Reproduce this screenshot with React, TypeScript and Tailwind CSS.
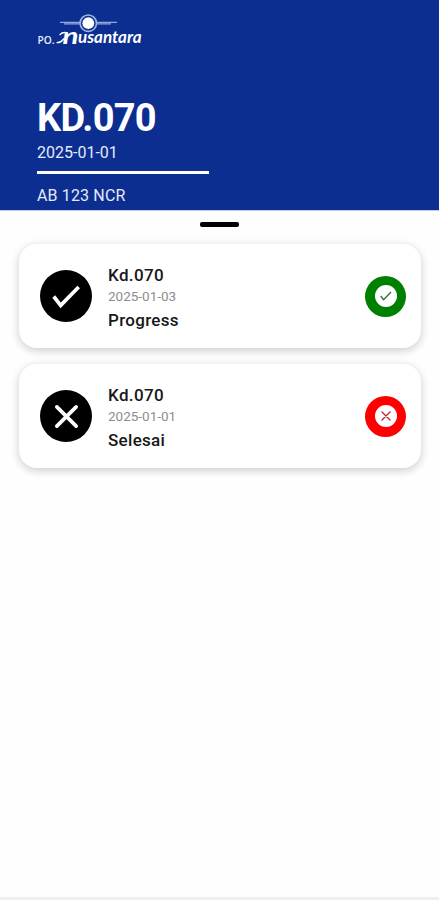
type Status = 'progress' | 'done'

type Trip = {
  code: string
  date: string
  label: string
  status: Status
}

const TRIPS: Trip[] = [
  { code: 'Kd.070', date: '2025-01-03', label: 'Progress', status: 'progress' },
  { code: 'Kd.070', date: '2025-01-01', label: 'Selesai', status: 'done' },
]

function Logo() {
  return (
    <svg className="block w-[110px] h-[38px]" viewBox="36 10 110 38" fill="none">
      {/* Emblem */}
      <path d="M60 22.3H80M97 22.3H117M64 23.9H80M97 23.9H111" stroke="#8fa9df" strokeWidth={1.2} />
      <circle cx="88.3" cy="23.2" r="8.2" stroke="#9db5e6" strokeWidth={1.6} />
      <circle cx="88.3" cy="23.2" r="5.9" fill="#fff" />
      {/* Name */}
      <text x="37.5" y="44" fill="#e8effc" fontFamily="Open Sans, sans-serif" fontSize="10" fontWeight="600" textLength="17" lengthAdjust="spacingAndGlyphs">PO.</text>
      <path d="M57 42.6C59.5 42.6 62 41.2 63.5 39" stroke="#fff" strokeWidth={1.4} strokeLinecap="round" />
      <path d="M60 34.6C61.5 32.8 64 32.2 66.5 32.8" stroke="#fff" strokeWidth={1.4} strokeLinecap="round" />
      <text x="62.5" y="43.5" fill="#fff" fontFamily="Lato, sans-serif" fontSize="22" fontStyle="italic" fontWeight="700" textLength="16" lengthAdjust="spacingAndGlyphs">n</text>
      <text x="78" y="43.3" fill="#fff" fontFamily="Lato, sans-serif" fontSize="16.5" fontStyle="italic" fontWeight="700" textLength="63.5" lengthAdjust="spacingAndGlyphs">usantara</text>
    </svg>
  )
}

function Mark({ status, className, width }: { status: Status; className: string; width: number }) {
  return (
    <svg className={className} viewBox="0 0 30 30" fill="none" stroke="currentColor" strokeWidth={width}>
      {status === 'progress'
        ? <path d="M1.8 15L9 24.2L27.6 5.2" />
        : <path d="M5 5L25 25M25 5L5 25" strokeLinecap="round" />}
    </svg>
  )
}

function TripCard({ trip }: { trip: Trip }) {
  const progress = trip.status === 'progress'

  return (
    <div className="flex h-[104px] items-center rounded-[18px] bg-white pl-[21px] pr-[15px] shadow-[0_3px_8px_rgba(0,0,0,0.15),0_1px_12px_rgba(0,0,0,0.06)]">
      <div className="flex size-[52px] shrink-0 items-center justify-center rounded-full bg-black text-white">
        <Mark status={trip.status} className="size-[29px]" width={3.8} />
      </div>

      <div className="ml-4 flex-1 pt-[3px]">
        <p className="text-[17px] leading-[22px] font-medium tracking-[0.35px] text-[#171717]">{trip.code}</p>
        <p className="text-[13.5px] leading-[21px] text-[#8d8d8d]">{trip.date}</p>
        <p className="mt-[2px] text-[17px] leading-[22px] font-medium tracking-[0.3px] text-[#171717]">{trip.label}</p>
      </div>

      <div className={`flex size-[41px] shrink-0 items-center justify-center rounded-full ${progress ? 'bg-[#008000]' : 'bg-[#ff0000]'}`}>
        <div className={`flex size-[22px] items-center justify-center rounded-full bg-white ${progress ? 'text-[#247b24]' : 'text-[#b52832]'}`}>
          <Mark status={trip.status} className="size-[12px]" width={3.3} />
        </div>
      </div>
    </div>
  )
}

export default function App() {
  return (
    <div className="flex h-[900px] w-[439px] flex-col bg-[#fefefe] font-['Roboto',sans-serif]">
      {/* Header */}
      <header className="h-[210px] shrink-0 bg-[#0c2e90] pl-[37px] pt-[10px] text-white">
        <div className="-ml-px">
          <Logo />
        </div>
        <h1 className="mt-[48px] text-[38px] leading-[44px] font-bold tracking-[-0.7px]">KD.070</h1>
        <p className="mt-[2px] text-[16px] leading-[22px] text-[#e3eafa]">2025-01-01</p>
        <div className="mt-[7px] h-[3px] w-[172px] bg-white" />
        <p className="mt-[11px] text-[16px] leading-[22px] tracking-[0.15px] text-[#e3eafa]">AB 123 NCR</p>
      </header>

      {/* Sheet */}
      <main className="flex-1 border-t border-[#c3caed] pt-[11px]">
        <div className="mx-auto h-[5px] w-[39px] rounded-[2px] bg-black" />
        <div className="mt-[17px] flex flex-col gap-4 pl-[19px] pr-[18px]">
          {TRIPS.map(trip => <TripCard key={trip.date} trip={trip} />)}
        </div>
      </main>

      <div className="h-[3px] shrink-0 bg-[#efefef]" />
    </div>
  )
}
